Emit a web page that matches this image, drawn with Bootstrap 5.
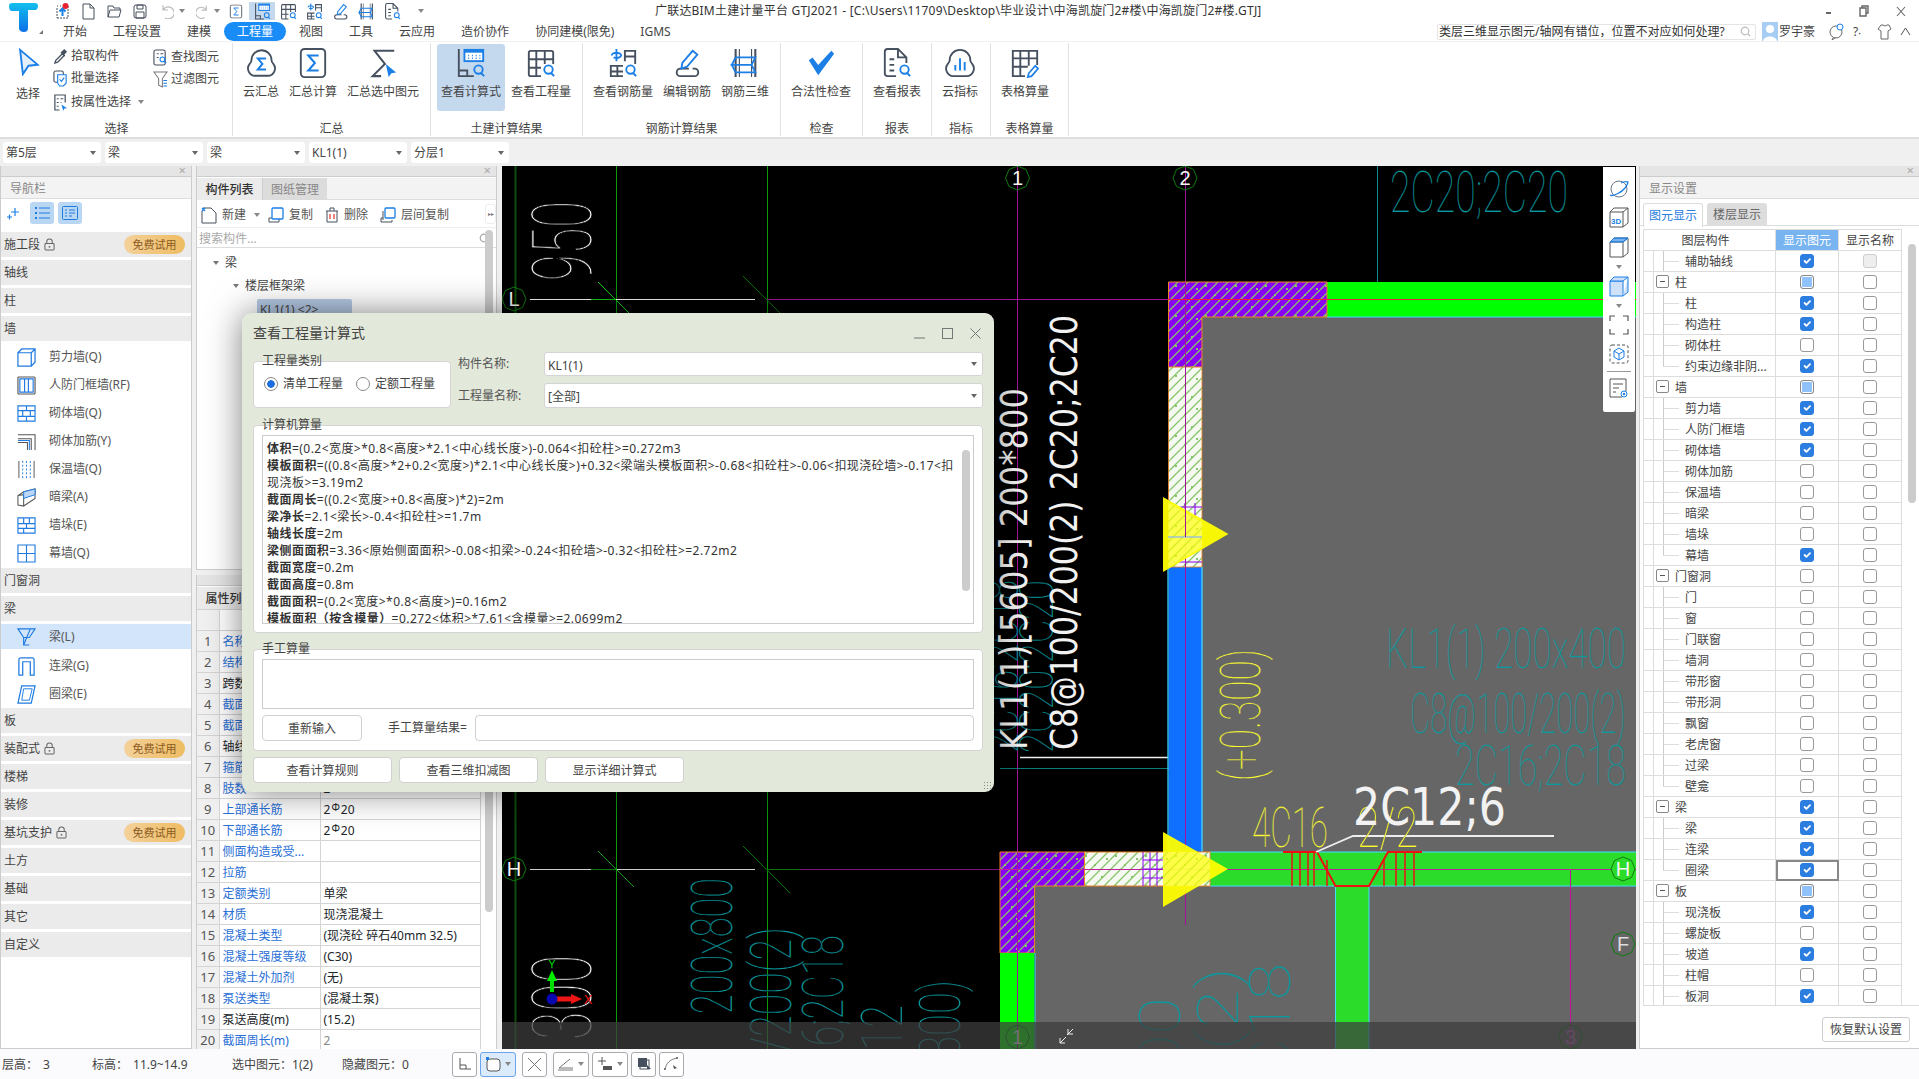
<!DOCTYPE html>
<html lang="zh-CN">
<head>
<meta charset="utf-8">
<title>广联达BIM土建计量平台 GTJ2021</title>
<link rel="stylesheet" href="https://cdn.jsdelivr.net/npm/bootstrap@5.3.0/dist/css/bootstrap.min.css">
<style>
html,body{height:100%;}
body{width:1919px;height:1079px;overflow:hidden;background:#f0f0f0;font-family:"Noto Sans","Noto Sans CJK SC",sans-serif;font-size:12px;line-height:16px;color:#444;position:relative;}
svg{display:block;flex:none;}
.app-top{height:41px;background:#fff;}
.logo-box{width:46px;height:41px;padding:3px 0 0 8px;position:relative;}
.logo-caret{position:absolute;left:39px;bottom:7px;width:0;height:0;border-left:4px solid transparent;border-bottom:4px solid #777;}
.title-row{height:22px;}
.qi{width:26px;height:18px;margin-top:2px;display:flex;align-items:center;justify-content:center;}
.qi.on{background:#c5d9ee;}
.qc{width:6px;margin-top:2px;height:18px;display:flex;align-items:center;justify-content:center;}
.qc::after,.tri-down::after{content:"";border-left:3px solid transparent;border-right:3px solid transparent;border-top:4px solid #888;}
.ms3p{margin-left:3px;}.ms5p{margin-left:7px;}.ms13p{margin-left:13px;}
.app-title{margin-left:231px;color:#333;white-space:nowrap;line-height:22px;letter-spacing:.2px;}
.win-btns{margin-left:auto;width:93px;padding-right:13px;color:#555;font-size:13px;}
.tab-row{height:19px;padding-left:4px;}
.rtab{padding:0 13px;height:19px;line-height:19px;color:#444;white-space:nowrap;}
.rtab.active-tab{background:#1a8cf7;color:#fff;border-radius:10px;}
.help-box{margin-left:auto;display:flex;align-items:center;}
.ask-box{width:319px;height:16px;border:1px solid #e4e4e4;border-radius:2px;padding-left:1px;overflow:hidden;white-space:nowrap;line-height:14px;display:flex;justify-content:space-between;align-items:center;color:#333;margin-right:6px;}
.user-name{margin:0 14px 0 1px;white-space:nowrap;}
.ribbon{height:98px;background:#fff;border-top:1px solid #f1f1f1;border-bottom:2px solid #dedede;padding-top:1px;}
.rgroup{border-right:1px solid #e2e2e2;height:93px;position:relative;flex:none;}
.g1{width:233px;}.g2{width:198px;}.g3{width:152px;}.g4{width:198px;}.g5{width:82px;}.g6{width:69px;}.g7{width:59px;}.g8{width:78px;}
.rgroup-inner{display:flex;gap:2px;padding:1px 0 0 6px;height:72px;}
.rbtn{padding:4px 4px 0;height:67px;display:flex;flex-direction:column;align-items:center;white-space:nowrap;line-height:16px;color:#444;border-radius:3px;}
.rbtn.sel{background:#c5d9ee;}
.rbtn svg{margin-bottom:6px;}
.rgroup-label{position:absolute;left:0;right:0;top:78px;text-align:center;color:#444;}
.g1 .rgroup-label{right:-1px;}
.sel-big{width:42px;padding-top:5px;margin:0 0 0 7px;}
.small-col{display:flex;flex-direction:column;padding-top:2px;}
.small-col .sm-item{display:flex;align-items:center;height:22px;white-space:nowrap;gap:3px;}
.small-col .sm-low{margin-top:2px;}
.col-two{margin-left:9px;padding-top:3px;}
.combo-bar{height:27px;padding:3px 0 0 3px;gap:4px;background:#f0f0f0;}
.combo-sel{width:98px;height:21px;font-size:12px;line-height:15px;padding:2px 12px 2px 3px;border:0;border-radius:3px;color:#444;background-color:#fff;background-image:url("data:image/svg+xml,%3csvg xmlns='http://www.w3.org/2000/svg' viewBox='0 0 6 4'%3e%3cpath fill='%23666' d='M0 0h6L3 4z'/%3e%3c/svg%3e");background-size:6px 4px;background-position:right 5px center;}
.main-row{height:883px;}
.panel-left{width:192px;margin-right:4px;background:#fff;border-left:1px solid #ccc;border-right:1px solid #ccc;border-bottom:1px solid #ccc;}
.panel-mid{width:301px;margin-right:5px;}
.strip{height:11px;background:#e5e5e5;position:relative;border-bottom:1px solid #ccc;}
.strip::after{content:"×";position:absolute;right:5px;top:-3px;font-size:13px;line-height:14px;color:#aaa;}
.panel-head{height:22px;line-height:23px;background:#f3f3f3;color:#888;padding-left:9px;border-bottom:1px solid #ddd;}
.nav-tools{height:28px;padding:3px 0 0 2px;gap:4px;}
.nav-tool-btn{width:24px;height:22px;border-radius:3px;background:#b9d6f3;display:flex;align-items:center;justify-content:center;}
.nav-plain{width:20px;height:22px;display:flex;align-items:center;justify-content:center;margin-right:3px;}
.nav-cat{height:25px;background:#ebebeb;margin-bottom:3px;display:flex;align-items:center;padding-left:3px;color:#444;}
.first-cat{margin-top:5px;}
.try-pill{margin-left:auto;margin-right:6px;width:61px;height:19px;border-radius:10px;background:linear-gradient(90deg,#f4d19b,#eebc62);color:#8a5a1e;font-size:11px;line-height:19px;text-align:center;}
.nav-sub{height:28px;display:flex;align-items:center;color:#555;padding-left:16px;gap:13px;}
.nav-sub.cur{height:25px;background:#d2e5fb;margin-bottom:3px;}
.sub-group{margin-top:-1px;margin-bottom:1px;}
.comp-box{height:404px;background:#fff;border:1px solid #ccc;border-top:0;position:relative;overflow:hidden;}
.tabs-line{height:22px;background:#f3f3f3;border-bottom:1px solid #ddd;margin-top:1px;}
.tab-a,.tab-b{width:65px;height:22px;line-height:23px;text-align:center;}
.tab-a{background:#ebebeb;color:#333;font-weight:500;}
.tab-b{background:#dcdcdc;color:#888;border-left:1px solid #ccc;}
.comp-tools{height:28px;border-bottom:1px solid #eee;padding:3px 0 0 4px;align-items:center;position:relative;}
.ct-item{display:flex;align-items:center;white-space:nowrap;color:#555;gap:5px;}
.ct1{width:45px;}.ct2{width:57px;margin-left:0;}.ct3{width:55px;}.ct4{width:70px;}
.ct-caret{width:22px;}
.tri-down{display:flex;align-items:center;justify-content:center;}
.ct-more{position:absolute;right:0;top:4px;width:11px;height:20px;border:1px solid #eee;border-radius:3px;font-size:6px;line-height:18px;text-align:center;color:#777;white-space:nowrap;overflow:hidden;}
.search-row{height:20px;padding:2px 6px 0 2px;color:#aaa;border-bottom:1px solid #ddd;align-items:center;justify-content:space-between;}
.tree-a{padding:6px 0 0 16px;height:24px;display:flex;align-items:center;gap:6px;}
.tree-b{padding:2px 0 0 36px;height:25px;display:flex;align-items:center;gap:6px;}
.tree-car{width:0;height:0;border-left:3.5px solid transparent;border-right:3.5px solid transparent;border-top:4px solid #777;}
.tree-c{margin:2px 0 0 60px;width:95px;height:22px;background:#b6cbe6;padding-left:3px;line-height:22px;border-radius:2px 2px 0 0;}
.vscroll{position:absolute;right:3px;width:8px;border-radius:4px;background:#ccc;}
.vs1{top:64px;height:120px;}
.vs2{top:125px;height:212px;}
.prop-box{margin-top:5px;height:474px;background:#fff;border:1px solid #ccc;border-top:0;border-bottom:0;position:relative;overflow:hidden;}
.prop-table{width:284px;table-layout:fixed;border-collapse:collapse;margin:0;}
.prop-table td{height:21px;padding:1px 0 0 3px;border:1px solid #d4d4d4;border-left:0;white-space:nowrap;overflow:hidden;vertical-align:middle;line-height:17px;}
.prop-table td:first-child{width:22px;background:#f0f0f0;text-align:center;padding:1px 0 0;font-size:13px;color:#555;}
.prop-table td:nth-child(2){width:101px;}
.prop-table .head-row td{height:21px;text-align:center;}
.blue-name{color:#2a6fd6;}
.rb{font-size:10px;position:relative;top:-3px;padding:0 1px;}
.grey-v{color:#888;}
.canvas-wrap{width:1134px;height:883px;background:#000;position:relative;overflow:hidden;margin-right:3px;flex:none;}
.cad-draw{position:absolute;left:0;top:0;}
.t-thin{font-family:Roboto,"Liberation Sans",sans-serif;font-weight:100;paint-order:fill stroke;}
.on-black{stroke:#000;stroke-width:.25px;}
.on-black-big{stroke:#000;stroke-width:.9px;}
.on-grey{stroke:#666;stroke-width:.25px;}
.t-white{font-family:"DejaVu Sans",sans-serif;fill:#f2f2f2;}
.view-tools{position:absolute;right:1px;top:1px;width:32px;height:245px;background:#fff;border-radius:0 0 2px 2px;padding-top:11px;display:flex;flex-direction:column;align-items:center;}
.vt-item{height:29px;}
.vt-car{height:10px;margin-top:-3px;}
.vt-tall{height:20px;margin-top:3px;}
.vt-car2{height:10px;margin-top:6px;}
.vt-short{height:27px;}
.vt-sep{width:24px;height:1px;background:#999;margin:0 0 6px;}
.panel-right{width:280px;background:#fff;border-left:1px solid #ccc;border-bottom:1px solid #ccc;position:relative;}
.sub-tabs{padding:4px 0 0 3px;height:27px;border-bottom:1px solid #ddd;gap:4px;}
.st-a,.st-b{width:60px;height:23px;text-align:center;line-height:23px;border-radius:3px 3px 0 0;}
.st-a{border:1px solid #ddd;border-bottom:0;height:24px;background:#fff;color:#2b7de0;}
.st-b{background:#ddd;color:#666;}
.chk-wrap{margin:3px 0 0 3px;width:276px;height:777px;border-bottom:1px solid #ddd;overflow:hidden;position:relative;}
.chk-table{width:259px;table-layout:fixed;border-collapse:collapse;margin:0;border-left:1px solid #ddd;}
.chk-table td,.chk-table th{height:21px;padding:0;border:1px solid #ddd;font-weight:400;text-align:center;color:#444;vertical-align:middle;line-height:17px;}
.chk-table td:first-child{text-align:left;white-space:nowrap;overflow:hidden;background-repeat:no-repeat;padding-top:1px;}
.chk-table th:first-child{width:132px;padding-right:8px;}
.chk-table th:nth-child(2){width:63px;background:#78b4f0;color:#fff;}
.lv-c{padding-left:41px !important;background-image:linear-gradient(#ddd,#ddd),linear-gradient(#ccc,#ccc),linear-gradient(#ddd,#ddd);background-size:1px 100%,1px 100%,16px 1px;background-position:9px 0,19px 0,19px 50%;}
.lv-e{padding-left:41px !important;background-image:linear-gradient(#ddd,#ddd),linear-gradient(#ccc,#ccc),linear-gradient(#ddd,#ddd);background-size:1px 100%,1px 50%,16px 1px;background-position:9px 0,19px 0,19px 50%;}
.lv-p{padding-left:31px !important;position:relative;background-image:linear-gradient(#ddd,#ddd);background-size:1px 100%;background-position:9px 0;}
.minus-box{position:absolute;left:12px;top:3px;width:13px;height:13px;border:1px solid #888;border-radius:2px;background:#fff;}
.minus-box::after{content:"";position:absolute;left:3px;top:5px;width:5px;height:1px;background:#555;}
.form-check-input.cb{display:block;width:14px;height:14px;margin:0 auto;border:1px solid #999;border-radius:3px;}
.form-check-input.cb:checked{background-color:#2b7de0;border-color:#2b7de0;}
.form-check-input.cb:disabled{background-color:#eee;border-color:#ccc;opacity:1;}
.tri-box{display:block;width:14px;height:14px;border:1px solid #888;border-radius:3px;background:#8fc1fb;box-shadow:inset 0 0 0 1px #fff;margin:0 auto;}
.focus-cell{outline:2px solid #888;outline-offset:-2px;}
.vs3{right:3px;top:15px;height:259px;}
.restore-btn{position:absolute;right:9px;bottom:6px;width:88px;height:25px;padding:0;font-size:12px;line-height:23px;background:#fff;border:1px solid #ccc;border-radius:3px;color:#444;}
.status-bar{height:30px;background:#fbfbfd;padding-left:2px;align-items:center;}
.s1{width:90px;}.s2{width:140px;}.s3{width:110px;}.s4{width:110px;}
.s1,.s2,.s3,.s4{padding-top:1px;}
.stat-val{margin-left:5px;}
.sb-btn{height:25px;border:1px solid #aaa;border-radius:3px;background:#fff;display:flex;align-items:center;justify-content:center;margin-right:3px;gap:4px;}
.sb25{width:25px;}.sb36{width:36px;}
.sb-on{background:#dcebfb;border-color:#6aa6ea;margin-right:6px;}
.sb-gap{margin-right:6px;}
.calc-win{position:absolute;left:242px;top:313px;width:752px;height:479px;background:#e2e8da;border-radius:9px;box-shadow:0 0 34px rgba(0,0,0,.5);padding:0 11px;z-index:5;}
.win-head{height:39px;display:flex;align-items:center;justify-content:space-between;padding-top:1px;font-size:14px;color:#444;}
.win-ctl{display:flex;gap:17px;align-items:center;padding-right:2px;}
.grp{background:#fff;border:1px solid #d4d4d4;border-radius:4px;}
.grp-tt{display:block;margin:-9px 0 0 8px;line-height:16px;height:16px;color:#444;}
.grp2 .grp-tt,.grp3 .grp-tt{margin-left:0;}
.top-line{height:56px;align-items:flex-end;}
.grp1{width:198px;height:47px;flex:none;}
.radio-line{padding:7px 0 0 10px;gap:13px;align-items:center;display:flex;}
.rd{display:flex;align-items:center;gap:5px;white-space:nowrap;}
.form-check-input.rd-i{width:14px;height:14px;margin:0;border:1px solid #888;}
.form-check-input.rd-i:checked{background-color:#fff;border-color:#888;background-image:radial-gradient(circle,#1c6fe0 0 3.5px,#fff 4px);}
.fields{flex:1;padding-left:7px;}
.fld{display:flex;align-items:center;color:#555;}
.fld label{width:86px;flex:none;}
.fld + .fld{margin-top:7px;}
.win-sel{height:25px;padding:1px 14px 0 3px;font-size:12px;line-height:23px;border:1px solid #d4d4d4;border-radius:3px;color:#444;background-image:url("data:image/svg+xml,%3csvg xmlns='http://www.w3.org/2000/svg' viewBox='0 0 6 4'%3e%3cpath fill='%23666' d='M0 0h6L3 4z'/%3e%3c/svg%3e");background-size:6px 4px;background-position:right 5px center;}
.fld:first-child .win-sel{height:24px;}
.grp2{margin-top:17px;height:208px;padding:0 8px;}
.expr-box{margin-top:2px;height:189px;border:1px solid #ccc;padding:4px 0 0 4px;position:relative;overflow:hidden;line-height:17px;white-space:nowrap;color:#333;letter-spacing:.46px;}
.expr-box b{font-weight:700;}
.vs-exp{right:3px;top:14px;height:141px;}
.grp3{margin-top:16px;height:102px;padding:0 8px;}
.hand-area{height:50px;border:1px solid #ccc;border-radius:0;margin-top:2px;padding:2px;resize:none;font-size:12px;display:block;}
.hand-row{margin-top:6px;height:26px;align-items:center;}
.win-btn{height:26px;padding:1px 0 0;font-size:12px;line-height:24px;background:#fff;border:1px solid #d0d0d0;border-radius:4px;color:#444;}
.w100{width:100px;flex:none;}
.w139{width:139px;flex:none;}
.hand-lbl{margin-left:26px;width:87px;white-space:nowrap;color:#444;flex:none;}
.hand-in{flex:1;height:26px;border:1px solid #d0d0d0;border-radius:4px;padding:0 4px;font-size:12px;}
.win-foot{margin-top:6px;gap:7px;}
.grip{position:absolute;right:3px;bottom:3px;width:8px;height:8px;background-image:radial-gradient(circle,#888 0 1px,transparent 1px);background-size:3px 3px;}
</style>
</head>
<body>
<script src="https://cdn.jsdelivr.net/npm/bootstrap@5.3.0/dist/js/bootstrap.bundle.min.js"></script>

<svg class="d-none" xmlns="http://www.w3.org/2000/svg">
<g fill="none" stroke-width="2" stroke-linecap="round" stroke-linejoin="round">
<symbol id="i-cloudsum" viewBox="0 0 34 32"><path d="M10 30a8 8 0 0 1-6-13C5 16 6 15 6 13a11 11 0 0 1 22 0c0 2 1 3 2 4a8 8 0 0 1-6 13Z" fill="none" stroke="#46505f" stroke-width="2"/><path d="M22 11h-9l5 6-5 6h9" fill="none" stroke="#1b7fe6" stroke-width="2.2"/></symbol>
<symbol id="i-sum" viewBox="0 0 32 32"><rect x="3" y="1" width="26" height="30" rx="4" fill="none" stroke="#46505f" stroke-width="2"/><path d="M22 8H11l7 8-7 8h11" fill="none" stroke="#1b7fe6" stroke-width="2.2"/></symbol>
<symbol id="i-sumsel" viewBox="0 0 32 32"><path d="M28 3H7l11 14L5 30h9" fill="none" stroke="#46505f" stroke-width="2.2"/><path d="M19 17l11 9-5 1-3 4Z" fill="#1b7fe6"/></symbol>
<symbol id="i-calc" viewBox="0 0 32 32"><path d="M3 1v29h16M3 24h9v6" fill="none" stroke="#46505f" stroke-width="2"/><rect x="9" y="2" width="20" height="12" fill="#fff" stroke="#1b7fe6" stroke-width="2"/><rect x="9" y="2" width="20" height="3" fill="#1b7fe6"/><path d="M13 8h1m3 0h1m3 0h1m3 0h1M13 11h1m3 0h1m3 0h1m3 0h1" stroke="#1b7fe6" stroke-width="1.6"/><circle cx="24" cy="23" r="4.5" fill="none" stroke="#1b7fe6" stroke-width="2"/><path d="M27 27l3 3" stroke="#1b7fe6" stroke-width="2.2"/></symbol>
<symbol id="i-qty" viewBox="0 0 32 32"><path d="M16 30H5a2 2 0 0 1-2-2V5a2 2 0 0 1 2-2h22a2 2 0 0 1 2 2v12M3 12h26M3 21h13M11 3v27M20 3v14" fill="none" stroke="#46505f" stroke-width="2"/><circle cx="24" cy="23" r="4.5" fill="none" stroke="#1b7fe6" stroke-width="2"/><path d="M27 27l3 3" stroke="#1b7fe6" stroke-width="2.2"/></symbol>
<symbol id="i-rqty" viewBox="0 0 32 32"><path d="M16 30H3V19h13M10 19v11M3 25h13M18 14V3h11v14M18 9h11" fill="none" stroke="#46505f" stroke-width="2"/><path d="M4 8a5 3 0 0 1 10 0 5 3 0 0 1-8 2M9 1v13" fill="none" stroke="#1b7fe6" stroke-width="2"/><circle cx="24" cy="23" r="4.5" fill="none" stroke="#1b7fe6" stroke-width="2"/><path d="M27 27l3 3" stroke="#1b7fe6" stroke-width="2.2"/></symbol>
<symbol id="i-pen" viewBox="0 0 32 32"><path d="M18 22H9a4 4 0 0 0 0 8h15a4 4 0 0 0 0-8h-2" fill="none" stroke="#46505f" stroke-width="2"/><path d="M22 3l5 4-11 13-6 2 1-6Z" fill="none" stroke="#1b7fe6" stroke-width="2"/></symbol>
<symbol id="i-rack" viewBox="0 0 32 32"><path d="M6 1v30M27 1v30" fill="none" stroke="#46505f" stroke-width="2.2"/><path d="M10 1v30M23 1v30" fill="none" stroke="#46505f" stroke-width="1.2"/><path d="M6 10h21l-4 8H2l4-8M2 18h21l4 8H6Z" fill="none" stroke="#1b7fe6" stroke-width="2"/></symbol>
<symbol id="i-check" viewBox="0 0 32 32"><path d="M3 13l4-3 6 8L27 3l3 3-17 23Z" fill="#1b7fe6"/></symbol>
<symbol id="i-report" viewBox="0 0 32 32"><path d="M15 30H6a3 3 0 0 1-3-3V4a3 3 0 0 1 3-3h11l9 9v6M17 1v9h9" fill="none" stroke="#46505f" stroke-width="2"/><path d="M8 12h5M8 18h5M8 24h5" fill="none" stroke="#46505f" stroke-width="2"/><circle cx="24" cy="23" r="4.5" fill="none" stroke="#1b7fe6" stroke-width="2"/><path d="M27 27l3 3" stroke="#1b7fe6" stroke-width="2.2"/></symbol>
<symbol id="i-cloudbar" viewBox="0 0 34 32"><path d="M10 30a8 8 0 0 1-6-13C5 16 6 15 6 13a11 11 0 0 1 22 0c0 2 1 3 2 4a8 8 0 0 1-6 13Z" fill="none" stroke="#46505f" stroke-width="2"/><path d="M12 18v6M17 11v13M22 15v9" fill="none" stroke="#1b7fe6" stroke-width="2"/></symbol>
<symbol id="i-gridpen" viewBox="0 0 32 32"><path d="M16 30H3V3h26v15M3 11h26M3 20h16M11 3v27M20 3v16" fill="none" stroke="#46505f" stroke-width="2"/><path d="M27 19l3 3-7 8-4 1 1-4Z" fill="none" stroke="#1b7fe6" stroke-width="1.8"/></symbol>
<symbol id="i-arrow" viewBox="0 0 24 30"><path d="M3 2l19 16-10 1-6 9Z" fill="#e3effb" stroke="#1b7fe6" stroke-width="2"/></symbol>
<symbol id="i-dropper" viewBox="0 0 16 18"><path d="M2 16l1-3 7-7 2 2-7 7Z" fill="none" stroke="#46505f" stroke-width="1.4"/><path d="M9 4l3-3 3 3-3 3 1 1-1 1-4-4 1-1Z" fill="#46505f"/></symbol>
<symbol id="i-batch" viewBox="0 0 16 18"><rect x="1" y="1" width="10" height="12" rx="2" fill="none" stroke="#46505f" stroke-width="1.2"/><path d="M5 5h9v9l-3 3H7l-2-3Z" fill="#fff" stroke="#1b7fe6" stroke-width="1.2"/><path d="M7 10l2 2 3-4" fill="none" stroke="#1b7fe6" stroke-width="1.2"/></symbol>
<symbol id="i-prop" viewBox="0 0 16 18"><path d="M7 17H2V1h11v8" fill="none" stroke="#46505f" stroke-width="1.3"/><path d="M4 5h2M8 5h3M4 9h2M8 9h1M4 13h2" stroke="#46505f" stroke-width="1.3"/><path d="M9 11l6 4-3 .5-1 2.5Z" fill="#1b7fe6"/></symbol>
<symbol id="i-find" viewBox="0 0 16 18"><rect x="1" y="1" width="12" height="16" rx="2" fill="none" stroke="#46505f" stroke-width="1.2"/><path d="M4 5h2M8 5h3M4 9h2" stroke="#46505f" stroke-width="1.2"/><circle cx="10" cy="11" r="2.5" fill="#fff" stroke="#1b7fe6" stroke-width="1.2"/><path d="M12 13l2 2" stroke="#1b7fe6" stroke-width="1.3"/></symbol>
<symbol id="i-funnel" viewBox="0 0 16 18"><path d="M1 1h14l-5 7v9l-4-2V8Z" fill="none" stroke="#777" stroke-width="1.1"/><path d="M11 10h4M11 13h4M11 16h4" stroke="#1b7fe6" stroke-width="1.1"/></symbol>
</g>
<symbol id="n-box" viewBox="0 0 20 20"><path d="M1 5h14v14H1ZM1 5l4-4h14v14l-4 4M15 5l4-4" fill="none" stroke="#1e7be0" stroke-width="1.3"/></symbol>
<symbol id="n-door" viewBox="0 0 20 20"><rect x="1" y="1" width="18" height="18" rx="1" fill="none" stroke="#555" stroke-width="1.2"/><path d="M3 3h14v14H3ZM8 3v14M12 3v14" fill="none" stroke="#1e7be0" stroke-width="1.2"/></symbol>
<symbol id="n-brick" viewBox="0 0 20 20"><path d="M1 2h18v16H1ZM1 7h18M1 13h18M10 2v5M6 7v6M14 7v6M10 13v5" fill="none" stroke="#1e7be0" stroke-width="1.2"/></symbol>
<symbol id="n-rein" viewBox="0 0 20 20"><path d="M1 3h18v16M1 7h14v12M1 11h10v8" fill="none" stroke="#555" stroke-width="1.1"/><path d="M1 9h12v10" fill="none" stroke="#1e7be0" stroke-width="1.1"/></symbol>
<symbol id="n-ins" viewBox="0 0 20 20"><path d="M2 1v18M18 1v18" stroke="#555" stroke-width="1" fill="none"/><path d="M10 1v18M6 1v18M14 1v18" stroke="#1e7be0" stroke-width="1" stroke-dasharray="2 2" fill="none"/></symbol>
<symbol id="n-hidden" viewBox="0 0 20 20"><path d="M1 8l6-1v12l-6-1ZM7 7l12-5v-0M1 8l6-4 12-3v10L7 19" fill="none" stroke="#555" stroke-width="1.1"/><path d="M7 4l12-3v6L7 11Z" fill="#bcd7f5" stroke="#1e7be0" stroke-width="1"/></symbol>
<symbol id="n-pier" viewBox="0 0 20 20"><path d="M1 2h18v16H1ZM1 8h18M1 13h18M7 2v6M13 2v6M10 8v5M7 13v5" fill="none" stroke="#1e7be0" stroke-width="1.2"/></symbol>
<symbol id="n-curtain" viewBox="0 0 20 20"><path d="M1 1h18v18H1ZM1 10h18M10 1v18" fill="none" stroke="#1e7be0" stroke-width="1.2"/></symbol>
<symbol id="n-beam" viewBox="0 0 20 20"><path d="M1 2l6 9h6l6-9ZM7 11v8h6M7 11l0 8" fill="none" stroke="#1e7be0" stroke-width="1.2"/><path d="M7 19l7-17" fill="none" stroke="#1e7be0" stroke-width="1.2"/></symbol>
<symbol id="n-link" viewBox="0 0 20 20"><path d="M2 19V3a2 2 0 0 1 2-2h12a2 2 0 0 1 2 2v16h-4V5H6v14Z" fill="none" stroke="#1e7be0" stroke-width="1.3"/></symbol>
<symbol id="n-ring" viewBox="0 0 20 20"><path d="M5 1h14l-4 18H1Z" fill="none" stroke="#1e7be0" stroke-width="1.3"/><path d="M7 4h9l-3 12H5Z" fill="none" stroke="#1e7be0" stroke-width="1"/></symbol>
<symbol id="i-lock" viewBox="0 0 12 14"><path d="M3 6V4a3 3 0 0 1 6 0v2" fill="none" stroke="#666" stroke-width="1.1"/><rect x="1" y="6" width="10" height="7" rx="1" fill="none" stroke="#666" stroke-width="1.1"/><circle cx="6" cy="9.5" r="1" fill="#666"/></symbol>
</svg>

<header class="app-top d-flex">
  <div class="logo-box">
    <svg width="30" height="29" viewBox="0 0 30 29"><defs><linearGradient id="lg" x1="0" y1="0" x2="0" y2="1"><stop offset="0" stop-color="#12c0ee"/><stop offset="1" stop-color="#0c6fe8"/></linearGradient></defs><path d="M1 3c0-2 1-3 3-3h23c2 0 3 1 3 3s-1 4-3 4h-7v18c0 3-2 4-4 4s-5-1-5-4V8H4C2 8 1 6 1 3Z" fill="url(#lg)"/></svg>
    <span class="logo-caret"></span>
  </div>
  <div class="flex-grow-1">
    <div class="title-row d-flex">
      <span class="qi ms3p"><svg width="17" height="17" viewBox="0 0 17 17"><path d="M3 3h1m2 0h1M3 15h11v-12h-2M3 5v10" fill="none" stroke="#46505f" stroke-dasharray="2 1"/><path d="M8.500 13V6M5.500 8.500l3-3 3 3" fill="none" stroke="#1b7fe6" stroke-width="2"/><circle cx="11.500" cy="3" r="3" fill="#e8222e"/></svg></span>
      <span class="qi"><svg width="15" height="17" viewBox="0 0 15 17"><path d="M2 16V1h7l4 4v11Z" fill="none" stroke="#46505f"/><path d="M9 1v4h4" fill="none" stroke="#46505f"/></svg></span>
      <span class="qi"><svg width="15" height="15" viewBox="0 0 15 15"><path d="M1 13V2h5l1 2h6v2M1 13l2-7h11l-2 7Z" fill="none" stroke="#46505f"/></svg></span>
      <span class="qi"><svg width="14" height="15" viewBox="0 0 14 15"><rect x="1" y="1" width="12" height="13" rx="2" fill="none" stroke="#46505f"/><path d="M4 1h6v4H4ZM3 8h8v6H3Z" fill="none" stroke="#46505f"/></svg></span>
      <span class="qi"><svg width="15" height="15" viewBox="0 0 15 15"><path d="M4 1v5h5M4 6a6 6 0 1 1 2 8" fill="none" stroke="#bbb" stroke-width="1.2"/></svg></span>
      <span class="qc"></span>
      <span class="qi ms5p w-auto px-1"><svg width="14" height="15" viewBox="0 0 15 15"><path d="M11 1v5H6M11 6a6 6 0 1 0-2 8" fill="none" stroke="#bbb" stroke-width="1.2"/></svg></span>
      <span class="qc"></span>
      <span class="qi ms3p"><svg width="14" height="17" viewBox="0 0 32 32"><use href="#i-sum"/></svg></span>
      <span class="qi on"><svg width="17" height="17" viewBox="0 0 32 32"><use href="#i-calc"/></svg></span>
      <span class="qi"><svg width="17" height="17" viewBox="0 0 32 32"><use href="#i-qty"/></svg></span>
      <span class="qi"><svg width="17" height="17" viewBox="0 0 32 32"><use href="#i-rqty"/></svg></span>
      <span class="qi"><svg width="17" height="17" viewBox="0 0 32 32"><use href="#i-pen"/></svg></span>
      <span class="qi"><svg width="17" height="17" viewBox="0 0 32 32"><use href="#i-rack"/></svg></span>
      <span class="qi"><svg width="17" height="17" viewBox="0 0 32 32"><use href="#i-report"/></svg></span>
      <span class="qc ms13p"></span>
      <span class="app-title">广联达BIM土建计量平台 GTJ2021 - [C:\Users\11709\Desktop\毕业设计\中海凯旋门2#楼\中海凯旋门2#楼.GTJ]</span>
      <div class="win-btns d-flex justify-content-between align-items-center">
        <svg width="6" height="6" viewBox="0 0 6 6"><path d="M0 5h5" stroke="#666" stroke-width="2"/></svg>
        <svg width="10" height="12" viewBox="0 0 10 12"><path d="M3 3V1h6v7H7M1 3h6v8H1Z" fill="none" stroke="#666" stroke-width="1.4"/></svg>
        <svg width="10" height="11" viewBox="0 0 10 11"><path d="M1 1l8 9M9 1l-8 9" stroke="#666" stroke-width="1.1"/></svg>
      </div>
    </div>
    <div class="tab-row d-flex">
      <span class="rtab">开始</span><span class="rtab">工程设置</span><span class="rtab">建模</span><span class="rtab active-tab">工程量</span><span class="rtab">视图</span><span class="rtab">工具</span><span class="rtab">云应用</span><span class="rtab">造价协作</span><span class="rtab">协同建模(限免)</span><span class="rtab">IGMS</span>
      <div class="help-box">
        <div class="ask-box"><span>类层三维显示图元/轴网有错位，位置不对应如何处理?</span><svg class="me-1" width="11" height="11" viewBox="0 0 11 11"><circle cx="5" cy="5" r="3.800" fill="none" stroke="#bbb" stroke-width="1.200"/><path d="M8 8l2 2" stroke="#bbb" stroke-width="1.300"/></svg></div>
        <svg width="16" height="19" viewBox="0 0 16 19"><rect width="16" height="19" fill="#a8cdf5"/><circle cx="8" cy="7" r="4" fill="#fff"/><path d="M1 19c1-6 13-6 14 0Z" fill="#fff"/></svg>
        <span class="user-name">罗宇豪</span>
        <svg class="me-2" width="16" height="17" viewBox="0 0 16 17"><ellipse cx="7" cy="9" rx="6" ry="6" fill="none" stroke="#666"/><path d="M4 15l-1 2 3-2" fill="none" stroke="#666"/><circle cx="11" cy="4" r="3" fill="#fff" stroke="#1b7fe6"/></svg>
        <span class="me-3">?<span class="small">‧</span></span>
        <svg class="me-2" width="15" height="16" viewBox="0 0 15 16"><path d="M4 15V7L1 5l3-4h2l2 1 2-1 2 0 2 4-3 2v8Z" fill="none" stroke="#666"/></svg>
        <svg class="me-2" width="11" height="9" viewBox="0 0 11 9"><path d="M1 8l4.500-7L10 8" fill="none" stroke="#555"/></svg>
      </div>
    </div>
  </div>
</header>

<section class="ribbon d-flex">
  <div class="rgroup g1">
    <div class="d-flex">
      <div class="rbtn sel-big"><svg width="23" height="28" viewBox="0 0 24 30"><use href="#i-arrow"/></svg><span class="pt-1">选择</span></div>
      <div class="small-col ms-1">
        <div class="sm-item"><svg width="15" height="17" viewBox="0 0 16 18"><use href="#i-dropper"/></svg>拾取构件</div>
        <div class="sm-item"><svg width="15" height="17" viewBox="0 0 16 18"><use href="#i-batch"/></svg>批量选择</div>
        <div class="sm-item sm-low"><svg width="15" height="17" viewBox="0 0 16 18"><use href="#i-prop"/></svg>按属性选择<span class="tri-down ms-1"></span></div>
      </div>
      <div class="small-col col-two">
        <div class="sm-item"><svg width="15" height="17" viewBox="0 0 16 18"><use href="#i-find"/></svg>查找图元</div>
        <div class="sm-item"><svg width="15" height="17" viewBox="0 0 16 18"><use href="#i-funnel"/></svg>过滤图元</div>
      </div>
    </div>
    <div class="rgroup-label">选择</div>
  </div>
  <div class="rgroup g2">
    <div class="rgroup-inner">
      <div class="rbtn"><svg width="31" height="30" viewBox="0 0 34 32"><use href="#i-cloudsum"/></svg>云汇总</div>
      <div class="rbtn"><svg width="30" height="30" viewBox="0 0 32 32"><use href="#i-sum"/></svg>汇总计算</div>
      <div class="rbtn"><svg width="30" height="30" viewBox="0 0 32 32"><use href="#i-sumsel"/></svg>汇总选中图元</div>
    </div>
    <div class="rgroup-label">汇总</div>
  </div>
  <div class="rgroup g3">
    <div class="rgroup-inner">
      <div class="rbtn sel"><svg width="32" height="30" viewBox="0 0 32 32"><use href="#i-calc"/></svg>查看计算式</div>
      <div class="rbtn"><svg width="32" height="30" viewBox="0 0 32 32"><use href="#i-qty"/></svg>查看工程量</div>
    </div>
    <div class="rgroup-label">土建计算结果</div>
  </div>
  <div class="rgroup g4">
    <div class="rgroup-inner">
      <div class="rbtn"><svg width="32" height="30" viewBox="0 0 32 32"><use href="#i-rqty"/></svg>查看钢筋量</div>
      <div class="rbtn"><svg width="32" height="30" viewBox="0 0 32 32"><use href="#i-pen"/></svg>编辑钢筋</div>
      <div class="rbtn"><svg width="32" height="30" viewBox="0 0 32 32"><use href="#i-rack"/></svg>钢筋三维</div>
    </div>
    <div class="rgroup-label">钢筋计算结果</div>
  </div>
  <div class="rgroup g5">
    <div class="rgroup-inner">
      <div class="rbtn"><svg width="32" height="30" viewBox="0 0 32 32"><use href="#i-check"/></svg>合法性检查</div>
    </div>
    <div class="rgroup-label">检查</div>
  </div>
  <div class="rgroup g6">
    <div class="rgroup-inner">
      <div class="rbtn"><svg width="32" height="30" viewBox="0 0 32 32"><use href="#i-report"/></svg>查看报表</div>
    </div>
    <div class="rgroup-label">报表</div>
  </div>
  <div class="rgroup g7">
    <div class="rgroup-inner">
      <div class="rbtn"><svg width="32" height="30" viewBox="0 0 34 32"><use href="#i-cloudbar"/></svg>云指标</div>
    </div>
    <div class="rgroup-label">指标</div>
  </div>
  <div class="rgroup g8">
    <div class="rgroup-inner">
      <div class="rbtn"><svg width="32" height="30" viewBox="0 0 32 32"><use href="#i-gridpen"/></svg>表格算量</div>
    </div>
    <div class="rgroup-label">表格算量</div>
  </div>
</section>

<div class="combo-bar d-flex">
  <select class="form-select combo-sel"><option>第5层</option></select>
  <select class="form-select combo-sel"><option>梁</option></select>
  <select class="form-select combo-sel"><option>梁</option></select>
  <select class="form-select combo-sel"><option>KL1(1)</option></select>
  <select class="form-select combo-sel"><option>分层1</option></select>
</div>

<main class="main-row d-flex">
  <aside class="panel-left">
    <div class="strip"></div>
    <div class="panel-head">导航栏</div>
    <div class="nav-tools d-flex">
      <span class="nav-plain"><svg width="14" height="14" viewBox="0 0 14 14"><path d="M9 2v8M5 6h8M1 11h5M3.500 8.500v5" stroke="#1b7fe6" fill="none" stroke-width="1.200"/></svg></span>
      <span class="nav-tool-btn"><svg width="16" height="14" viewBox="0 0 16 14"><path d="M5 2h11M5 7h11M5 12h11" stroke="#1e7be0"/><path d="M1 2h2M1 7h2M1 12h2" stroke="#1e7be0" stroke-width="2"/></svg></span>
      <span class="nav-tool-btn"><svg width="16" height="14" viewBox="0 0 16 14"><rect x=".5" y=".5" width="15" height="13" rx="1" fill="none" stroke="#1e7be0"/><path d="M3 4h2M7 4h6M3 7h2M7 7h6M3 10h2M7 10h3" stroke="#1e7be0"/></svg></span>
    </div>
    <div class="nav-cat first-cat">施工段<svg class="ms-1" width="11" height="13" viewBox="0 0 12 14"><use href="#i-lock"/></svg><span class="try-pill">免费试用</span></div>
    <div class="nav-cat">轴线</div>
    <div class="nav-cat">柱</div>
    <div class="nav-cat">墙</div>
    <div class="sub-group">
      <div class="nav-sub"><svg width="19" height="19" viewBox="0 0 20 20"><use href="#n-box"/></svg>剪力墙(Q)</div>
      <div class="nav-sub"><svg width="19" height="19" viewBox="0 0 20 20"><use href="#n-door"/></svg>人防门框墙(RF)</div>
      <div class="nav-sub"><svg width="19" height="19" viewBox="0 0 20 20"><use href="#n-brick"/></svg>砌体墙(Q)</div>
      <div class="nav-sub"><svg width="19" height="19" viewBox="0 0 20 20"><use href="#n-rein"/></svg>砌体加筋(Y)</div>
      <div class="nav-sub"><svg width="19" height="19" viewBox="0 0 20 20"><use href="#n-ins"/></svg>保温墙(Q)</div>
      <div class="nav-sub"><svg width="19" height="19" viewBox="0 0 20 20"><use href="#n-hidden"/></svg>暗梁(A)</div>
      <div class="nav-sub"><svg width="19" height="19" viewBox="0 0 20 20"><use href="#n-pier"/></svg>墙垛(E)</div>
      <div class="nav-sub"><svg width="19" height="19" viewBox="0 0 20 20"><use href="#n-curtain"/></svg>幕墙(Q)</div>
    </div>
    <div class="nav-cat">门窗洞</div>
    <div class="nav-cat">梁</div>
    <div class="sub-beam">
      <div class="nav-sub cur"><svg width="19" height="19" viewBox="0 0 20 20"><use href="#n-beam"/></svg>梁(L)</div>
      <div class="nav-sub"><svg width="19" height="19" viewBox="0 0 20 20"><use href="#n-link"/></svg>连梁(G)</div>
      <div class="nav-sub"><svg width="19" height="19" viewBox="0 0 20 20"><use href="#n-ring"/></svg>圈梁(E)</div>
    </div>
    <div class="nav-cat">板</div>
    <div class="nav-cat">装配式<svg class="ms-1" width="11" height="13" viewBox="0 0 12 14"><use href="#i-lock"/></svg><span class="try-pill">免费试用</span></div>
    <div class="nav-cat">楼梯</div>
    <div class="nav-cat">装修</div>
    <div class="nav-cat">基坑支护<svg class="ms-1" width="11" height="13" viewBox="0 0 12 14"><use href="#i-lock"/></svg><span class="try-pill">免费试用</span></div>
    <div class="nav-cat">土方</div>
    <div class="nav-cat">基础</div>
    <div class="nav-cat">其它</div>
    <div class="nav-cat">自定义</div>
  </aside>

  <div class="panel-mid">
    <div class="comp-box">
      <div class="strip"></div>
      <div class="tabs-line d-flex"><div class="tab-a">构件列表</div><div class="tab-b">图纸管理</div></div>
      <div class="comp-tools d-flex">
        <span class="ct-item ct1"><svg width="16" height="17" viewBox="0 0 16 17"><path d="M2 1h8l5 5v10H1V4" fill="none" stroke="#46505f"/><path d="M1 1l3 3M4 1L1 4" stroke="#1b7fe6" stroke-width="1.300"/></svg>新建</span>
        <span class="tri-down ct-caret"></span>
        <span class="ct-item ct2"><svg width="16" height="16" viewBox="0 0 16 16"><path d="M4 11H1v4h10v-3" fill="none" stroke="#46505f"/><rect x="4" y="1" width="11" height="11" rx="1" fill="none" stroke="#1b7fe6" stroke-width="1.300"/></svg>复制</span>
        <span class="ct-item ct3"><svg width="14" height="16" viewBox="0 0 14 16"><path d="M1 4h12M5 4V1h4v3M2 4v11h10V4" fill="none" stroke="#46505f"/><path d="M5 7v5M9 7v5" stroke="#e0453a" stroke-width="1.300"/></svg>删除</span>
        <span class="ct-item ct4"><svg width="16" height="16" viewBox="0 0 16 16"><path d="M3 11H1v4h11v-2" fill="none" stroke="#46505f"/><path d="M3 4v9" stroke="#46505f"/><rect x="5" y="1" width="10" height="10" rx="1" fill="none" stroke="#1b7fe6" stroke-width="1.300"/></svg>层间复制</span>
        <span class="ct-more">▸▸</span>
      </div>
      <div class="search-row d-flex"><span>搜索构件...</span><svg width="11" height="11" viewBox="0 0 11 11"><circle cx="5" cy="5" r="3.800" fill="none" stroke="#aaa" stroke-width="1.200"/><path d="M8 8l2 2" stroke="#aaa" stroke-width="1.300"/></svg></div>
      <div class="tree-a"><span class="tree-car"></span>梁</div>
      <div class="tree-b"><span class="tree-car"></span>楼层框架梁</div>
      <div class="tree-c">KL1(1) &lt;2&gt;</div>
      <span class="vscroll vs1"></span>
    </div>
    <div class="prop-box">
      <div class="strip"></div>
      <div class="tabs-line d-flex"><div class="tab-a">属性列表</div></div>
      <table class="table prop-table">
        <tbody>
        <tr class="head-row"><td></td><td>属性名称</td><td>属性值</td></tr>
        <tr><td>1</td><td class="blue-name">名称</td><td>KL1(1)</td></tr>
        <tr><td>2</td><td class="blue-name">结构类别</td><td>楼层框架梁</td></tr>
        <tr><td>3</td><td>跨数量</td><td>1</td></tr>
        <tr><td>4</td><td class="blue-name">截面宽度(mm)</td><td>200</td></tr>
        <tr><td>5</td><td class="blue-name">截面高度(mm)</td><td>800</td></tr>
        <tr><td>6</td><td>轴线距梁左...</td><td>(100)</td></tr>
        <tr><td>7</td><td class="blue-name">箍筋</td><td>C8@100/200(2)</td></tr>
        <tr><td>8</td><td class="blue-name">肢数</td><td>2</td></tr>
        <tr><td>9</td><td class="blue-name">上部通长筋</td><td>2<span class="rb">Φ</span>20</td></tr>
        <tr><td>10</td><td class="blue-name">下部通长筋</td><td>2<span class="rb">Φ</span>20</td></tr>
        <tr><td>11</td><td class="blue-name">侧面构造或受...</td><td></td></tr>
        <tr><td>12</td><td class="blue-name">拉筋</td><td></td></tr>
        <tr><td>13</td><td class="blue-name">定额类别</td><td>单梁</td></tr>
        <tr><td>14</td><td class="blue-name">材质</td><td>现浇混凝土</td></tr>
        <tr><td>15</td><td class="blue-name">混凝土类型</td><td>(现浇砼 碎石40mm 32.5)</td></tr>
        <tr><td>16</td><td class="blue-name">混凝土强度等级</td><td>(C30)</td></tr>
        <tr><td>17</td><td class="blue-name">混凝土外加剂</td><td>(无)</td></tr>
        <tr><td>18</td><td class="blue-name">泵送类型</td><td>(混凝土泵)</td></tr>
        <tr><td>19</td><td>泵送高度(m)</td><td>(15.2)</td></tr>
        <tr><td>20</td><td class="blue-name">截面周长(m)</td><td class="grey-v">2</td></tr>
        </tbody>
      </table>
      <span class="vscroll vs2"></span>
    </div>
  </div>

  <div class="canvas-wrap">
    <svg class="cad-draw" width="1134" height="883" viewBox="502 166 1134 883">
      <defs>
        <pattern id="hatch-p" width="30" height="30" patternUnits="userSpaceOnUse"><rect width="30" height="30" fill="#8a00f5"/><path d="M-2 2L2 -2M0 10L10 0M0 20L20 0M0 30L30 0M10 30L30 10M20 30L30 20M28 32L32 28" stroke="#86c56a" stroke-width="1.300"/><path d="M5 15h2v2H5ZM21 6h2v2h-2ZM14 24h2v2h-2ZM26 18h2v2h-2Z" fill="#86c56a"/></pattern>
        <pattern id="hatch-w" width="30" height="30" patternUnits="userSpaceOnUse"><rect width="30" height="30" fill="#f6f9f1"/><path d="M-2 2L2 -2M0 10L10 0M0 20L20 0M0 30L30 0M10 30L30 10M20 30L30 20M28 32L32 28" stroke="#86c56a" stroke-width="1.300"/><path d="M5 15h2v2H5ZM21 6h2v2h-2ZM14 24h2v2h-2ZM26 18h2v2h-2Z" fill="#86c56a"/></pattern>
      </defs>
      <rect x="1202" y="317" width="434" height="735" fill="#666"/>
      <rect x="1035" y="886" width="170" height="165" fill="#666"/>
      <g stroke-width="1" fill="none">
        <path d="M515.500 166V1049" stroke="#0d4d0d" stroke-width="2"/>
        <path d="M616.500 166V1049M767.500 166V1049" stroke="#0c9a0c"/>
        <path d="M1017.500 166V952M1185.500 166V282" stroke="#a3149c"/>
        <path d="M1377.500 166V305" stroke="#0a8a8a"/>
        <path d="M530 299.500H591M615 299.500H755" stroke="#f5f5f5" stroke-width="1.200"/>
        <path d="M591 299.500H616" stroke="#12c712"/>
        <path d="M767 299.500H1168" stroke="#a3149c"/>
        <path d="M598 282l34 34" stroke="#12d012"/>
        <path d="M743 276l39 39" stroke="#0b730b"/>
        <path d="M530 869.500H591M615 869.500H755" stroke="#ccc" stroke-width="1.200"/>
        <path d="M591 869.500H616M767 869.500H800" stroke="#0b730b"/>
        <path d="M800 869.500H1000" stroke="#80117c"/>
        <path d="M598 851l36 36" stroke="#12a012"/>
        <path d="M743 846l47 47" stroke="#0b730b"/>
        <path d="M1020 757.500H1168" stroke="#eee" stroke-width="1.500"/>
        <path d="M1000 768.500H1180" stroke="#0a7c7c"/>
      </g>
      <g class="t-thin on-black-big" fill="#f2f2f2">
        <text transform="translate(591,281) rotate(-90)" font-size="84" textLength="80" lengthAdjust="spacingAndGlyphs">950</text>
        <text transform="translate(591,1040) rotate(-90)" font-size="84" textLength="85" lengthAdjust="spacingAndGlyphs">300</text>
      </g>
      <g class="t-thin on-black" fill="#0a9a9f">
        <text x="1390" y="212" font-size="58" textLength="178" lengthAdjust="spacingAndGlyphs">2C20;2C20</text>
        <text transform="translate(732,1014) rotate(-90)" font-size="58" textLength="136" lengthAdjust="spacingAndGlyphs">200x800</text>
        <text transform="translate(791,1200) rotate(-90)" font-size="58" textLength="273" lengthAdjust="spacingAndGlyphs">C8@100/200(2)</text>
        <text transform="translate(843,1110) rotate(-90)" font-size="58" textLength="175" lengthAdjust="spacingAndGlyphs">2C16;2C18</text>
        <text transform="translate(902,1100) rotate(-90)" font-size="58" textLength="95" lengthAdjust="spacingAndGlyphs">4C12</text>
        <text transform="translate(960,1100) rotate(-90)" font-size="58" textLength="120" lengthAdjust="spacingAndGlyphs">(0.300)</text>
        <text transform="translate(1018,753) rotate(-90)" font-size="48" textLength="173" lengthAdjust="spacingAndGlyphs">2C16;2C18</text>
        <text transform="translate(1053,753) rotate(-90)" font-size="48" textLength="173" lengthAdjust="spacingAndGlyphs">2C20;2C20</text>
      </g>
      <g class="t-white">
        <text transform="translate(1027,750) rotate(-90)" font-size="37" textLength="362" lengthAdjust="spacingAndGlyphs">KL1(1)[5605] 200*800</text>
        <text transform="translate(1077,750) rotate(-90)" font-size="38" textLength="435" lengthAdjust="spacingAndGlyphs">C8@100/200(2) 2C20;2C20</text>
      </g>
      <!-- frame -->
      <rect x="1327" y="282" width="310" height="35" fill="#00ff00"/>
      <path d="M1327 317H1636" stroke="#3fe0ff"/>
      <rect x="1168.500" y="367" width="33.500" height="200" fill="url(#hatch-w)"/>
      <rect x="1168.500" y="567" width="33.500" height="285" fill="#0f6fff"/>
      <path d="M1168.500 282H1327V317H1202V367H1168.500Z" fill="url(#hatch-p)" stroke="#f08020"/>
      <path d="M1168.500 367V567H1202V367" fill="none" stroke="#f08020" stroke-width=".8"/>
      <path d="M1168 567V852M1202 567V852" stroke="#3fe0ff" stroke-width="1.200"/>
      <path d="M1185.500 282V925" stroke="#a3149c"/>
      <path d="M1168 299.500H1636" stroke="#ee1a3a"/>
      <rect x="1210" y="852" width="426" height="34" fill="#2bdc2b"/>
      <path d="M1210 852H1636M1210 886H1636" stroke="#3fe0ff"/>
      <rect x="1335.500" y="886" width="33.500" height="165" fill="#2bdc2b"/>
      <path d="M1335.500 886V1049M1369 886V1049" stroke="#3fe0ff"/>
      <path d="M1000 852H1084.500V886H1034.500V953H1000Z" fill="url(#hatch-p)" stroke="#f08020"/>
      <rect x="1084.500" y="852" width="125.500" height="34" fill="url(#hatch-w)" stroke="#f08020"/>
      <rect x="1000" y="953" width="34.500" height="98" fill="#00ff00"/>
      <path d="M1035 953V1049" stroke="#3fe0ff"/>
      <path d="M1017.500 852V1049" stroke="#a3149c"/>
      <path d="M1000 869.500H1636" stroke="#c0209a"/>
      <path d="M1570.500 869V1049" stroke="#c4139c"/>
      <path d="M1143 852v34M1150 852v34M1157 852v34M1143 860h20M1143 869h20M1143 878h20" stroke="#8a00f5" fill="none"/>
      <path d="M1185 503v18M1195 503v18M1180 507h22M1170 562h32" stroke="#8a00f5" fill="none"/>
      <!-- yellow cursors -->
      <path d="M1163 497L1228.500 534 1163 572Z" fill="#ffff00" fill-opacity=".95"/>
      <path d="M1163 832L1228 869 1163 907Z" fill="#ffff00" fill-opacity=".95"/>
      <path d="M1168.500 503L1202 522V547L1168.500 567Z" fill="url(#hatch-w)" fill-opacity=".28"/>
      <path d="M1163 852H1210V886H1163Z" fill="url(#hatch-w)" fill-opacity=".25"/>
      <path d="M1168 537H1202" stroke="#9cc3d6" stroke-width="1.500"/>
      <path d="M1185.500 497V537" stroke="#a3149c"/>
      <!-- rebar -->
      <g stroke="#ee0f0f" fill="none" stroke-width="1.500">
        <path d="M1283 852H1317l18.500 34H1369l19-34h34" stroke-width="2"/>
        <path d="M1292 852v34M1300 852v34M1308 852v34M1314 852v34M1327 860v26M1384 860v26M1396 852v34M1405 852v34M1414 852v34"/>
      </g>
      <path d="M1316 852L1353 836H1554" stroke="#eee" stroke-width="1.800" fill="none"/>
      <g class="t-thin on-grey" fill="#ffff30">
        <text x="1252" y="847" font-size="56" textLength="76" lengthAdjust="spacingAndGlyphs">4C16</text>
        <text x="1357" y="847" font-size="56" textLength="61" lengthAdjust="spacingAndGlyphs">2/2</text>
        <text transform="translate(1260,781) rotate(-90)" font-size="56" textLength="132" lengthAdjust="spacingAndGlyphs">(+0.300)</text>
      </g>
      <g class="t-thin on-grey" fill="#0a9a9f">
        <text x="1386" y="668" font-size="56" textLength="240" lengthAdjust="spacingAndGlyphs">KL1(1) 200x400</text>
        <text x="1410" y="733" font-size="56" textLength="216" lengthAdjust="spacingAndGlyphs">C8@100/200(2)</text>
        <text x="1455" y="785" font-size="56" textLength="171" lengthAdjust="spacingAndGlyphs">2C16;2C18</text>
        <text transform="translate(1180,1110) rotate(-90)" font-size="58" textLength="113" lengthAdjust="spacingAndGlyphs">400</text>
        <text transform="translate(1238,1130) rotate(-90)" font-size="58" textLength="163" lengthAdjust="spacingAndGlyphs">00(2)</text>
        <text transform="translate(1290,1120) rotate(-90)" font-size="58" textLength="157" lengthAdjust="spacingAndGlyphs">2C18</text>
      </g>
      <text class="t-white" x="1353" y="825" font-size="52" textLength="153" lengthAdjust="spacingAndGlyphs" fill="#fff">2C12;6</text>
      <!-- axis bubbles -->
      <g fill="none" stroke="#0d7a0d" stroke-width="1">
        <path d="M1017.500 166l8.500 3.500 3.500 8.500-3.500 8.500-8.500 3.500-8.500-3.500-3.500-8.500 3.500-8.500Z"/>
        <path d="M1185 166l8.500 3.500 3.500 8.500-3.500 8.500-8.500 3.500-8.500-3.500-3.500-8.500 3.500-8.500Z"/>
        <path d="M514 287l8.500 3.500 3.500 8.500-3.500 8.500-8.500 3.500-8.500-3.500-3.500-8.500 3.500-8.500Z"/>
        <path d="M514 857l8.500 3.500 3.500 8.500-3.500 8.500-8.500 3.500-8.500-3.500-3.500-8.500 3.500-8.500Z"/>
        <path d="M1623 857l8.500 3.500 3.500 8.500-3.500 8.500-8.500 3.500-8.500-3.500-3.500-8.500 3.500-8.500Z" fill="#2bdc2b"/>
        <path d="M1623 932l8.500 3.500 3.500 8.500-3.500 8.500-8.500 3.500-8.500-3.500-3.500-8.500 3.500-8.500Z"/>
        <path d="M1017.500 1025l8.500 3.500 3.500 8.500-3.500 8.500-8.500 3.500-8.500-3.500-3.500-8.500 3.500-8.500Z"/>
        <path d="M1570.500 1025l8.500 3.500 3.500 8.500-3.500 8.500-8.500 3.500-8.500-3.500-3.500-8.500 3.500-8.500Z"/>
      </g>
      <g font-family="Liberation Sans,sans-serif" font-size="20" fill="#f5f5f5" text-anchor="middle">
        <text x="1017.500" y="185">1</text><text x="1185" y="185">2</text><text x="514" y="306">L</text><text x="514" y="876">H</text><text x="1623" y="876">H</text><text x="1623" y="951" fill="#ddd">F</text><text x="1017.500" y="1044">1</text><text x="1570.500" y="1044" fill="#c070c0">3</text>
      </g>
      <!-- origin gizmo -->
      <path d="M552 992V975" stroke="#00dd00" stroke-width="4"/>
      <path d="M552 970l-5 11h10Z" fill="#00ee00"/>
      <path d="M552 999H573" stroke="#ee1515" stroke-width="5"/>
      <path d="M582 999l-11-5v10Z" fill="#ee1515"/>
      <circle cx="552" cy="999" r="5.500" fill="#0808b0"/>
      <text x="552" y="968" font-family="Liberation Sans,sans-serif" font-size="11" fill="#00dd00" text-anchor="middle">Y</text>
      <text x="588" y="1004" font-family="Liberation Sans,sans-serif" font-size="13" fill="#ee1515" text-anchor="middle">X</text>
      <rect x="502" y="1022" width="1134" height="27" fill="rgb(61,61,61)" fill-opacity=".735"/>
      <path d="M1060 1043l6-6M1060 1038v5h5M1073 1029l-6 6M1068 1034h5M1068 1034v-5" stroke="#eee" stroke-width="1" fill="none"/>
    </svg>
    <div class="view-tools">
      <div class="vt-item"><svg width="22" height="22" viewBox="0 0 22 22"><circle cx="11" cy="11" r="8" fill="#fff" stroke="#6a7686"/><path d="M2 17C5 19 14 14 17 10c2-3 3-5 3-6-2-1-5 0-7 1" fill="none" stroke="#1b7fe6" stroke-width="1.300"/></svg></div>
      <div class="vt-item"><svg width="20" height="22" viewBox="0 0 20 22"><path d="M1 5h13v15H1ZM1 5l4-4h14v15l-5 4M14 5l5-4" fill="none" stroke="#555"/><text x="2" y="17" font-size="8" fill="#1b7fe6" font-family="Liberation Sans,sans-serif" font-weight="700">3D</text></svg></div>
      <div class="vt-item"><svg width="20" height="22" viewBox="0 0 20 22"><path d="M1 6h13v15H1Z" fill="none" stroke="#555"/><path d="M14 21l5-4V2l-5 4M1 6l4-4h14" fill="none" stroke="#555"/><path d="M1 6l4-4h14l-5 4Z" fill="#1b7fe6" fill-opacity=".6" stroke="#1b7fe6"/></svg></div>
      <div class="vt-car tri-down"></div>
      <div class="vt-tall"><svg width="20" height="22" viewBox="0 0 20 22"><path d="M1 6h13v15H1Z" fill="#cfe1f8" stroke="#1b7fe6"/><path d="M14 21l5-4V2H5L1 6h13l5-4" fill="#cfe1f8" stroke="#1b7fe6"/></svg></div>
      <div class="vt-car2 tri-down"></div>
      <div class="vt-item mt-1"><svg width="20" height="20" viewBox="0 0 20 20"><path d="M1 6V1h5M14 1h5v5M1 14v5h5M14 19h5v-5" fill="none" stroke="#555" stroke-width="1.200"/></svg></div>
      <div class="vt-short"><svg width="20" height="20" viewBox="0 0 20 20"><rect x="1" y="1" width="18" height="18" rx="2" fill="none" stroke="#555" stroke-dasharray="3 2"/><path d="M10 4l5 3v6l-5 3-5-3V7ZM5 7l5 3 5-3M10 10v6" fill="none" stroke="#1b7fe6"/></svg></div>
      <div class="vt-sep"></div>
      <div class="vt-item"><svg width="20" height="20" viewBox="0 0 20 20"><path d="M13 19H1V1h16v12" fill="none" stroke="#555"/><path d="M4 6h10M4 10h6M4 14h3" stroke="#555"/><circle cx="15" cy="16" r="3" fill="#fff" stroke="#1b7fe6"/><circle cx="15" cy="16" r="1.200" fill="#1b7fe6"/></svg></div>
    </div>
  </div>

  <aside class="panel-right">
    <div class="strip"></div>
    <div class="panel-head">显示设置</div>
    <div class="sub-tabs d-flex"><div class="st-a">图元显示</div><div class="st-b">楼层显示</div></div>
    <div class="chk-wrap">
      <table class="table chk-table">
        <thead><tr><th>图层构件</th><th>显示图元</th><th>显示名称</th></tr></thead>
        <tbody id="chk-body"></tbody>
      </table>
      <span class="vscroll vs3"></span>
    </div>
    <button class="btn restore-btn" type="button">恢复默认设置</button>
  </aside>
</main>

<footer class="status-bar d-flex">
  <div class="s1">层高：<span class="stat-val">3</span></div>
  <div class="s2">标高：<span class="stat-val">11.9~14.9</span></div>
  <div class="s3">选中图元：<span>1(2)</span></div>
  <div class="s4">隐藏图元：<span>0</span></div>
  <span class="sb-btn sb25"><svg width="14" height="14" viewBox="0 0 14 14"><path d="M2 1v11h11M2 8h6v4" fill="none" stroke="#555"/></svg></span>
  <span class="sb-btn sb36 sb-on"><svg width="15" height="15" viewBox="0 0 15 15"><rect x="1" y="2" width="13" height="12" rx="3" fill="#fff" stroke="#555"/><rect x="0" y="0" width="3" height="3" fill="#1b7fe6"/></svg><span class="tri-down"></span></span>
  <span class="sb-btn sb25 sb-gap"><svg width="15" height="15" viewBox="0 0 15 15"><path d="M1 1l13 13M14 1L1 14" stroke="#777"/></svg></span>
  <span class="sb-btn sb36"><svg width="16" height="14" viewBox="0 0 16 14"><path d="M1 11L12 2M1 11h14M0 13h15" fill="none" stroke="#777"/></svg><span class="tri-down"></span></span>
  <span class="sb-btn sb36"><svg width="16" height="14" viewBox="0 0 16 14"><path d="M1 4h8M5 0v8" stroke="#555"/><rect x="6" y="9" width="9" height="4" fill="#555"/></svg><span class="tri-down"></span></span>
  <span class="sb-btn sb25"><svg width="14" height="14" viewBox="0 0 14 14"><rect x="1" y="1" width="9" height="9" fill="#46505f"/><rect x="3" y="3" width="9" height="9" fill="none" stroke="#46505f"/><path d="M10 8l4 4h-4Z" fill="#46505f"/></svg></span>
  <span class="sb-btn sb25"><svg width="15" height="14" viewBox="0 0 15 14"><path d="M1 13C2 6 6 2 14 1" fill="none" stroke="#777"/><rect x="0" y="11" width="2" height="2" fill="#777"/><rect x="12" y="0" width="2" height="2" fill="#777"/><path d="M9 8l4 3-3 1Z" fill="#555"/></svg></span>
</footer>

<div class="calc-win">
  <div class="win-head"><span>查看工程量计算式</span>
    <div class="win-ctl">
      <svg width="11" height="11" viewBox="0 0 11 11"><path d="M0 10h11" stroke="#777"/></svg>
      <svg width="11" height="11" viewBox="0 0 11 11"><rect x=".5" y=".5" width="10" height="10" fill="none" stroke="#777"/></svg>
      <svg width="11" height="11" viewBox="0 0 11 11"><path d="M.5.5l10 10M10.500.5l-10 10" stroke="#777"/></svg>
    </div>
  </div>
  <div class="top-line d-flex">
    <div class="grp grp1">
      <span class="grp-tt">工程量类别</span>
      <div class="radio-line">
        <label class="rd"><input class="form-check-input rd-i" type="radio" name="kind" checked>清单工程量</label>
        <label class="rd"><input class="form-check-input rd-i" type="radio" name="kind">定额工程量</label>
      </div>
    </div>
    <div class="fields">
      <div class="fld"><label>构件名称:</label><select class="form-select win-sel"><option>KL1(1)</option></select></div>
      <div class="fld"><label>工程量名称:</label><select class="form-select win-sel"><option>[全部]</option></select></div>
    </div>
  </div>
  <div class="grp grp2">
    <span class="grp-tt">计算机算量</span>
    <div class="expr-box">
      <div><b>体积</b>=(0.2&lt;宽度&gt;*0.8&lt;高度&gt;*2.1&lt;中心线长度&gt;)-0.064&lt;扣砼柱&gt;=0.272m3</div>
      <div><b>模板面积</b>=((0.8&lt;高度&gt;*2+0.2&lt;宽度&gt;)*2.1&lt;中心线长度&gt;)+0.32&lt;梁端头模板面积&gt;-0.68&lt;扣砼柱&gt;-0.06&lt;扣现浇砼墙&gt;-0.17&lt;扣</div>
      <div>现浇板&gt;=3.19m2</div>
      <div><b>截面周长</b>=((0.2&lt;宽度&gt;+0.8&lt;高度&gt;)*2)=2m</div>
      <div><b>梁净长</b>=2.1&lt;梁长&gt;-0.4&lt;扣砼柱&gt;=1.7m</div>
      <div><b>轴线长度</b>=2m</div>
      <div><b>梁侧面面积</b>=3.36&lt;原始侧面面积&gt;-0.08&lt;扣梁&gt;-0.24&lt;扣砼墙&gt;-0.32&lt;扣砼柱&gt;=2.72m2</div>
      <div><b>截面宽度</b>=0.2m</div>
      <div><b>截面高度</b>=0.8m</div>
      <div><b>截面面积</b>=(0.2&lt;宽度&gt;*0.8&lt;高度&gt;)=0.16m2</div>
      <div><b>模板面积（按含模量）</b>=0.272&lt;体积&gt;*7.61&lt;含模量&gt;=2.0699m2</div>
      <span class="vscroll vs-exp"></span>
    </div>
  </div>
  <div class="grp grp3">
    <span class="grp-tt">手工算量</span>
    <textarea class="form-control hand-area"></textarea>
    <div class="hand-row d-flex">
      <button class="btn win-btn w100" type="button">重新输入</button>
      <span class="hand-lbl">手工算量结果=</span>
      <input class="form-control hand-in" type="text">
    </div>
  </div>
  <div class="win-foot d-flex">
    <button class="btn win-btn w139" type="button">查看计算规则</button>
    <button class="btn win-btn w139" type="button">查看三维扣减图</button>
    <button class="btn win-btn w139" type="button">显示详细计算式</button>
  </div>
  <span class="grip"></span>
</div>

<script>
var rows=[["c","辅助轴线",1,2],["p","柱",3,0],["c","柱",1,0],["c","构造柱",1,0],["c","砌体柱",0,0],["e","约束边缘非阴...",1,0],["p","墙",3,0],["c","剪力墙",1,0],["c","人防门框墙",1,0],["c","砌体墙",1,0],["c","砌体加筋",0,0],["c","保温墙",0,0],["c","暗梁",0,0],["c","墙垛",0,0],["e","幕墙",1,0],["p","门窗洞",0,0],["c","门",0,0],["c","窗",0,0],["c","门联窗",0,0],["c","墙洞",0,0],["c","带形窗",0,0],["c","带形洞",0,0],["c","飘窗",0,0],["c","老虎窗",0,0],["c","过梁",0,0],["e","壁龛",0,0],["p","梁",1,0],["c","梁",1,0],["c","连梁",1,0],["e","圈梁",1,0,1],["p","板",3,0],["c","现浇板",1,0],["c","螺旋板",0,0],["c","坡道",1,0],["c","柱帽",0,0],["c","板洞",1,0],["c","",0,0]];
function box(v){if(v===3)return '<span class="tri-box"></span>';if(v===2)return '<input class="form-check-input cb" type="checkbox" disabled>';return '<input class="form-check-input cb" type="checkbox"'+(v?' checked':'')+'>';}
document.getElementById("chk-body").innerHTML=rows.map(function(r){
 if(!r[1])return '<tr><td class="lv-c"></td><td></td><td></td></tr>';
 var c={c:"lv-c",e:"lv-e",p:"lv-p"}[r[0]];
 return '<tr><td class="'+c+'">'+(r[0]==="p"?'<span class="minus-box"></span>':'')+r[1]+'</td><td'+(r[4]?' class="focus-cell"':'')+'>'+box(r[2])+'</td><td>'+box(r[3])+'</td></tr>';
}).join("");
</script>
</body>
</html>
